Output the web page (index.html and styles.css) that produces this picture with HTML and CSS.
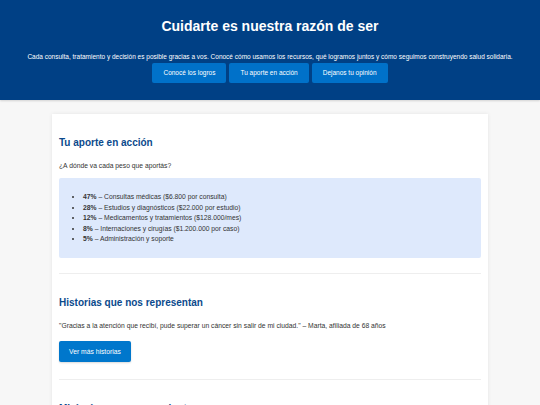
FILE: index.html
```html
<!DOCTYPE html>
<html lang="es">
<head>
<meta charset="utf-8">
<title>Cuidarte es nuestra razón de ser</title>
<link rel="stylesheet" href="styles.css">
</head>
<body>
<header class="hero">
  <h1 class="hero-title">Cuidarte es nuestra razón de ser</h1>
  <p class="hero-text">Cada consulta, tratamiento y decisión es posible gracias a vos. Conocé cómo usamos los recursos, qué logramos juntos y cómo seguimos construyendo salud solidaria.</p>
  <nav class="hero-actions">
    <a class="btn" href="#logros">Conocé los logros</a>
    <a class="btn" href="#aporte">Tu aporte en acción</a>
    <a class="btn" href="#opinion">Dejanos tu opinión</a>
  </nav>
</header>
<main class="card">
  <section class="section section-aporte" id="aporte">
    <h2 class="section-title">Tu aporte en acción</h2>
    <p class="section-text">¿A dónde va cada peso que aportás?</p>
    <div class="info-box">
      <ul class="info-list">
        <li><strong>47%</strong> – Consultas médicas ($6.800 por consulta)</li>
        <li><strong>28%</strong> – Estudios y diagnósticos ($22.000 por estudio)</li>
        <li><strong>12%</strong> – Medicamentos y tratamientos ($128.000/mes)</li>
        <li><strong>8%</strong> – Internaciones y cirugías ($1.200.000 por caso)</li>
        <li><strong>5%</strong> – Administración y soporte</li>
      </ul>
    </div>
  </section>
  <section class="section section-historias" id="historias">
    <h2 class="section-title">Historias que nos representan</h2>
    <p class="section-text quote">"Gracias a la atención que recibí, pude superar un cáncer sin salir de mi ciudad." – Marta, afiliada de 68 años</p>
    <a class="btn btn-card" href="#historias">Ver más historias</a>
  </section>
  <section class="section" id="logros">
    <h2 class="section-title">Mirá cómo avanzamos juntos</h2>
  </section>
</main>
</body>
</html>
```
FILE: styles.css
```css
html, body {
  margin: 0;
  padding: 0;
}
body {
  background: #f7f7f7;
  font-family: "Liberation Sans", Arial, Helvetica, sans-serif;
  color: #333;
}
.hero {
  background: #004085;
  color: #fff;
  text-align: center;
  height: 100px;
  box-sizing: border-box;
  padding: 18px 8px 0;
  box-shadow: 0 1px 2px rgba(0, 0, 0, 0.15);
}
.hero-title {
  margin: 0;
  font-size: 14px;
  line-height: 16px;
  font-weight: bold;
}
.hero-text {
  margin: 18px 0 0;
  font-size: 6.5px;
  line-height: 10px;
}
.hero-actions {
  margin-top: 1px;
  display: flex;
  justify-content: center;
  gap: 3px;
}
.btn {
  display: inline-block;
  height: 20px;
  line-height: 20px;
  padding: 0 11px;
  background: #0071c9;
  color: #fff;
  font-size: 6.5px;
  text-decoration: none;
  border-radius: 2px;
}
.card {
  display: block;
  width: 436px;
  box-sizing: border-box;
  margin: 14px auto 0;
  padding: 23px 7px 0;
  background: #fff;
  box-shadow: 0 0 4px rgba(0, 0, 0, 0.08);
  min-height: 400px;
}
.section {
  border-bottom: 1px solid #eee;
  margin-bottom: 23px;
}
.section-aporte {
  padding-bottom: 15px;
}
.section-historias {
  padding-bottom: 17px;
}
.section-title {
  margin: 0 0 12px;
  font-size: 10px;
  line-height: 12px;
  font-weight: bold;
  color: #0b4a8c;
}
.section-text {
  margin: 0 0 8px;
  font-size: 6.75px;
  line-height: 9px;
  color: #333;
}
.quote {
  margin-bottom: 10px;
}
.info-box {
  background: #dee9fc;
  border-radius: 2px;
  padding: 14px 10px 13px;
}
.info-list {
  margin: 0;
  padding-left: 14px;
  font-size: 6.75px;
  line-height: 10.5px;
  color: #333;
}
.btn-card {
  height: 21px;
  line-height: 21px;
  padding: 0 10px;
  font-size: 6.75px;
  background: #0077cc;
  box-shadow: 0 1px 2px rgba(0, 0, 0, 0.15);
}
```
